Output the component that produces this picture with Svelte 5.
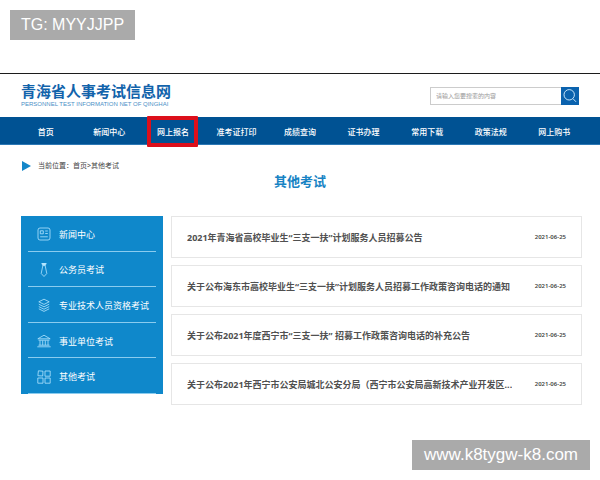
<script>
  const nav = ['首页', '新闻中心', '网上报名', '准考证打印', '成绩查询', '证书办理', '常用下载', '政策法规', '网上购书'];
  const active = '网上报名';
  const categories = [
    { icon: 'news', label: '新闻中心' },
    { icon: 'tie', label: '公务员考试' },
    { icon: 'layers', label: '专业技术人员资格考试' },
    { icon: 'bank', label: '事业单位考试' },
    { icon: 'grid', label: '其他考试' }
  ];
  const notices = [
    { title: '2021年青海省高校毕业生“三支一扶”计划服务人员招募公告', date: '2021-06-25' },
    { title: '关于公布海东市高校毕业生“三支一扶”计划服务人员招募工作政策咨询电话的通知', date: '2021-06-25' },
    { title: '关于公布2021年度西宁市“三支一扶” 招募工作政策咨询电话的补充公告', date: '2021-06-25' },
    { title: '关于公布2021年西宁市公安局城北公安分局（西宁市公安局高新技术产业开发区...', date: '2021-06-25' }
  ];
</script>

<div class="page" lang="zh-CN">
  <div class="tag top">TG: MYYJJPP</div>

  <header>
    <a class="logo" href="#home">
      <span class="name">青海省人事考试信息网</span>
      <span class="sub">PERSONNEL TEST INFORMATION NET OF QINGHAI</span>
    </a>
    <form class="search" onsubmit={(e) => e.preventDefault()}>
      <input type="text" aria-label="搜索" placeholder="请输入您要搜索的内容" />
      <button type="submit" aria-label="搜索">
        <svg viewBox="0 0 18 18"><circle cx="8.2" cy="7.8" r="5.2" /><path d="M12 11.7l3 3.1" /></svg>
      </button>
    </form>
  </header>

  <nav>
    {#each nav as item}
      <a href="#nav" class:active={item === active}>{item}</a>
    {/each}
  </nav>

  <div class="crumbs">
    <svg viewBox="0 0 9 10"><path d="M0 0L9 5L0 10Z" /></svg>
    <span>当前位置：<a href="#home">首页</a>&gt;<a href="#other">其他考试</a></span>
  </div>

  <h1>其他考试</h1>

  <main>
    <aside>
      {#each categories as { icon, label }}
        <a href="#category">
          <svg viewBox="0 0 14 14">
            {#if icon === 'news'}
              <rect x="1" y="1" width="12" height="12" rx="2" />
              <path d="M3.3 3.8h3v3h-3zM8.2 4h2.6M8.2 6.5h2.6M3.2 9.8h7.6" />
            {:else if icon === 'tie'}
              <path class="solid" d="M4.8 0h4.4L8.3 2.6H5.7z" />
              <path d="M5.8 2.8L4.2 10.5L7 13.5L9.8 10.5L8.2 2.8" />
            {:else if icon === 'layers'}
              <path d="M7 1.2L12.2 3.8L7 6.4L1.8 3.8zM1.8 6.2L7 8.8L12.2 6.2M1.8 8.6L7 11.2L12.2 8.6M1.8 10.8L7 13.4L12.2 10.8" />
            {:else if icon === 'bank'}
              <path d="M.8 4.8L7 1.2L13.2 4.8zM1.5 6.2h11M3 6.5v4.7M5.7 6.5v4.7M8.3 6.5v4.7M11 6.5v4.7M1.5 11.2h11M.3 12.8h13.4" />
            {:else}
              <path d="M1.4 .8L6 1.2L5.7 6L.9 5.7zM8 1h5.2v5.2H8zM.8 8H6v5.2H.8zM8 8h5.2v5.2H8z" />
            {/if}
          </svg>
          <span>{label}</span>
        </a>
      {/each}
    </aside>

    <section>
      {#each notices as { title, date }}
        <a class="notice" href="#notice">
          <span class="title">{title}</span>
          <time datetime={date}>{date}</time>
        </a>
      {/each}
    </section>
  </main>

  <div class="tag bottom">www.k8tygw-k8.com</div>
</div>

<style>
  :global(body) {
    background: #fff;
  }
  .page {
    padding-top: 73px;
    font-family: 'Noto Sans', 'Noto Sans CJK SC', sans-serif;
    color: #444;
  }
  a {
    color: inherit;
    text-decoration: none;
  }
  svg {
    display: block;
    flex: none;
    fill: none;
    stroke: currentColor;
  }
  .tag {
    position: absolute;
    box-sizing: border-box;
    height: 30px;
    padding: 0 11px;
    background: #aaa;
    color: #fff;
    font: 16px/30px 'Liberation Sans', sans-serif;
    white-space: nowrap;
  }
  .top {
    top: 10px;
    left: 10px;
  }
  .bottom {
    right: 10px;
    bottom: 10px;
    position: fixed;
    padding: 0 12px;
    font-size: 17px;
  }
  header {
    display: flex;
    justify-content: space-between;
    align-items: center;
    height: 43px;
    padding: 0 21px;
    border-top: 1px solid #1c1c1c;
  }
  .logo {
    display: flex;
    flex-direction: column;
    color: #1263ab;
    white-space: nowrap;
  }
  .name {
    font-size: 15px;
    font-weight: 700;
    line-height: 17px;
  }
  .sub {
    font: 6px/8px 'Liberation Sans', sans-serif;
    color: #4b8fc6;
  }
  .search {
    display: flex;
    width: 149px;
    height: 18px;
  }
  input {
    flex: 1;
    min-width: 0;
    box-sizing: border-box;
    padding: 0 5px;
    border: 1px solid #ccc;
    border-right: 0;
    border-radius: 0;
    font: inherit;
    font-size: 6px;
  }
  input::placeholder {
    color: #999;
  }
  .search button {
    width: 18px;
    padding: 0;
    border: 0;
    background: #0a62ae;
    color: #c5e4fa;
  }
  nav {
    display: flex;
    height: 28px;
    padding: 1px 14px 0;
    background: #005293;
    border-bottom: 1px solid #2c78b5;
    box-sizing: border-box;
    color: #fff;
    font-size: 8px;
    font-weight: 500;
  }
  nav a {
    position: relative;
    flex: 1;
    display: flex;
    align-items: center;
    justify-content: center;
    white-space: nowrap;
  }
  .active::after {
    content: '';
    position: absolute;
    inset: -2px 7px -3px 6px;
    border: 4px solid #dc0f1b;
    border-radius: 1px;
  }
  .crumbs {
    display: flex;
    align-items: center;
    gap: 7px;
    height: 12px;
    padding: 15px 22px 0;
    font-size: 7px;
    line-height: 12px;
  }
  .crumbs svg {
    width: 9px;
    height: 10px;
    fill: #1487c9;
    stroke: none;
  }
  h1 {
    margin: 0;
    text-align: center;
    font-size: 13px;
    line-height: 18px;
    color: #1783c4;
  }
  main {
    display: flex;
    align-items: flex-start;
    gap: 8px;
    padding: 26px 18px 0 21px;
  }
  aside {
    display: flex;
    flex-direction: column;
    box-sizing: border-box;
    width: 142px;
    min-height: 178px;
    padding: 0 7px;
    background: #0f88cb;
    color: #fff;
    font-size: 9px;
  }
  aside a {
    flex: 1;
    display: flex;
    align-items: center;
    gap: 8px;
    padding: 2px 0 0 9px;
    border-bottom: 1px solid #8accef;
    white-space: nowrap;
  }
  aside svg {
    width: 14px;
    height: 14px;
    color: #b5e6ff;
    stroke-width: 0.8;
  }
  .solid {
    fill: currentColor;
  }
  section {
    flex: 1;
    min-width: 0;
    display: flex;
    flex-direction: column;
    gap: 7px;
  }
  .notice {
    display: flex;
    align-items: center;
    justify-content: space-between;
    gap: 8px;
    box-sizing: border-box;
    min-height: 42px;
    padding: 0 15px;
    border: 1px solid #e6e6e6;
  }
  .title {
    min-width: 0;
    overflow: hidden;
    white-space: nowrap;
    text-overflow: ellipsis;
    font-size: 9px;
    font-weight: 700;
    color: #505050;
  }
  time {
    font-size: 6px;
    font-weight: 600;
  }
</style>
